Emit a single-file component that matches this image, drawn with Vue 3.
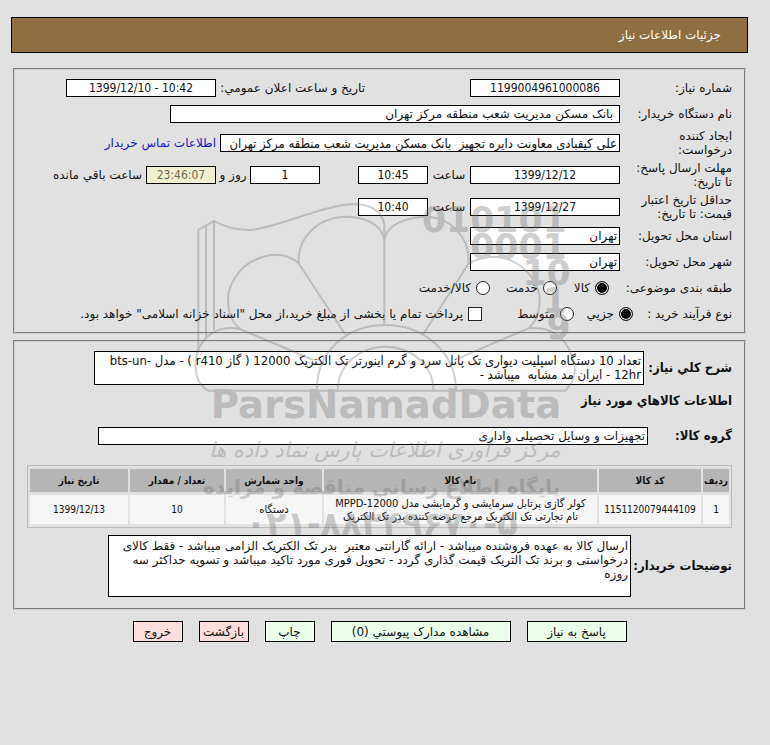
<script setup>
import { ref } from 'vue'

const subject = ref('goods')
const process = ref('small')
const treasury = ref(false)

const columns = [
  { key: 'row', title: 'ردیف' },
  { key: 'code', title: 'کد کالا' },
  { key: 'name', title: 'نام کالا' },
  { key: 'unit', title: 'واحد شمارش' },
  { key: 'qty', title: 'تعداد / مقدار' },
  { key: 'date', title: 'تاریخ نیاز' },
]
const items = [
  {
    row: '1',
    code: '1151120079444109',
    name: 'کولر گازی پرتابل سرمایشی و گرمایشی مدل MPPD-12000 نام تجارتی تک الکتریک مرجع عرضه کننده بدر تک الکتریک',
    unit: 'دستگاه',
    qty: '10',
    date: '1399/12/13',
  },
]
const summary = 'تعداد 10 دستگاه اسپلیت دیواری تک پانل سرد و گرم اینورتر تک الکتریک 12000 ( گاز r410 ) - مدل bts-un-12hr - ایران مد مشابه  میباشد -'
const notes = 'ارسال کالا به عهده فروشنده میباشد - ارائه گارانتی معتبر  بدر تک الکتریک الزامی میباشد - فقط کالای درخواستی و برند تک التریک قیمت گذاری گردد - تحویل فوری مورد تاکید میباشد و تسویه حداکثر سه روزه'
</script>

<template>
  <main class="page" dir="rtl">
    <h1 class="title">جزئیات اطلاعات نیاز</h1>

    <form class="form" @submit.prevent>
      <section class="panel">
        <div class="line">
          <label class="caption" for="number">شماره نیاز:</label>
          <input id="number" class="box center medium" value="1199004961000086" readonly />
          <div class="announce">
            <label for="announced">تاریخ و ساعت اعلان عمومي:</label>
            <input id="announced" class="box center medium" dir="ltr" value="1399/12/10 - 10:42" readonly />
          </div>
        </div>
        <div class="line">
          <label class="caption" for="buyer">نام دستگاه خریدار:</label>
          <input id="buyer" class="box wide inset" value="بانک مسکن مدیریت شعب منطقه مرکز تهران" readonly />
        </div>
        <div class="line tall">
          <label class="caption narrow" for="creator">ایجاد کننده درخواست:</label>
          <input id="creator" class="box long compact" value="علی کیقبادی معاونت دایره تجهیز  بانک مسکن مدیریت شعب منطقه مرکز تهران" readonly />
          <a class="link" href="#contact">اطلاعات تماس خریدار</a>
        </div>
        <div class="line tall">
          <label class="caption" for="deadline">مهلت ارسال پاسخ:<br />تا تاریخ:</label>
          <input id="deadline" class="box center medium" dir="ltr" value="1399/12/12" readonly />
          <label class="hour" for="deadlineHour">ساعت</label>
          <input id="deadlineHour" class="box center short" dir="ltr" value="10:45" readonly />
          <input id="days" class="box center short days" value="1" readonly />
          <label class="hour" for="days">روز و</label>
          <input id="left" class="box center short countdown" dir="ltr" value="23:46:07" readonly />
          <label class="after" for="left">ساعت باقي مانده</label>
        </div>
        <div class="line tall">
          <label class="caption" for="validity">حداقل تاریخ اعتبار<br />قیمت: تا تاریخ:</label>
          <input id="validity" class="box center medium" dir="ltr" value="1399/12/27" readonly />
          <label class="hour" for="validityHour">ساعت</label>
          <input id="validityHour" class="box center short" dir="ltr" value="10:40" readonly />
        </div>
        <div class="line">
          <label class="caption" for="province">استان محل تحویل:</label>
          <input id="province" class="box medium" value="تهران" readonly />
        </div>
        <div class="line">
          <label class="caption" for="city">شهر محل تحویل:</label>
          <input id="city" class="box medium" value="تهران" readonly />
        </div>
        <div class="line" role="radiogroup" aria-labelledby="subjectCaption">
          <span id="subjectCaption" class="caption subject">طبقه بندی موضوعی:</span>
          <label class="option first"><input v-model="subject" type="radio" value="goods" />کالا</label>
          <label class="option second"><input v-model="subject" type="radio" value="service" />خدمت</label>
          <label class="option"><input v-model="subject" type="radio" value="both" />کالا/خدمت</label>
        </div>
        <div class="line" role="radiogroup" aria-labelledby="processCaption">
          <span id="processCaption" class="caption process">نوع فرآیند خرید :</span>
          <label class="option small"><input v-model="process" type="radio" value="small" />جزیي</label>
          <label class="option mid"><input v-model="process" type="radio" value="medium" />متوسط</label>
          <label class="option"><input v-model="treasury" type="checkbox" />پرداخت تمام یا بخشی از مبلغ خرید،از محل "اسناد خزانه اسلامی" خواهد بود.</label>
        </div>
      </section>

      <section class="panel second-panel">
        <div class="line block">
          <label class="caption strong summary-caption" for="summary">شرح كلي نیاز:</label>
          <textarea id="summary" class="box area summary compact" :value="summary" readonly></textarea>
        </div>
        <h2 class="subtitle strong">اطلاعات کالاهاي مورد نیاز</h2>
        <div class="line block group">
          <label class="caption strong group-caption" for="group">گروه کالا:</label>
          <input id="group" class="box extra" value="تجهیزات و وسایل تحصیلی واداری" readonly />
        </div>
        <table class="goods">
          <thead>
            <tr>
              <th v-for="c in columns" :key="c.key" :class="c.key" scope="col">{{ c.title }}</th>
            </tr>
          </thead>
          <tbody>
            <tr v-for="item in items" :key="item.row">
              <td v-for="c in columns" :key="c.key" :class="{ words: c.key === 'name' || c.key === 'unit' }">{{ item[c.key] }}</td>
            </tr>
          </tbody>
        </table>
        <div class="line block">
          <label class="caption strong notes-caption" for="notes">توضیحات خریدار:</label>
          <textarea id="notes" class="box area notes" :value="notes" readonly></textarea>
        </div>
      </section>

      <div class="actions">
        <button class="ok normal" type="button">پاسخ به نیاز</button>
        <button class="ok large" type="button">مشاهده مدارک پیوستي (0)</button>
        <button class="ok" type="button">چاپ</button>
        <button class="exit" type="button">بازگشت</button>
        <button class="exit" type="button">خروج</button>
      </div>
    </form>

    <svg class="watermark" viewBox="0 0 1200 1080" direction="ltr" aria-hidden="true">
      <g fill="none" stroke="#6e6e6e" stroke-width="6">
        <path d="M55 490V120L102 93Q150 120 210 120C300 112 430 42 530 42Q604 48 613 105V404" />
        <path d="M78 107V440M102 93V420" />
        <path d="M613 150C604 94 540 80 495 80C405 84 350 150 357 222L495 432" />
        <path d="M613 150C622 94 700 80 740 80C820 84 872 150 865 222L730 432" />
        <path d="M357 222C330 192 280 190 250 200C175 222 138 290 145 345C148 385 165 405 182 418L400 510" />
        <path d="M865 222C900 197 955 195 985 208C1055 235 1085 300 1078 345C1074 385 1062 400 1045 415L828 508" />
        <path d="M182 418C105 400 50 450 47 520C46 562 62 590 85 602H1155C1178 582 1190 552 1182 520C1170 460 1125 405 1045 415" />
        <path d="M410 602C410 480 505 405 615 405C730 405 828 485 828 602" />
        <path d="M473 602C473 525 540 470 615 470C695 470 760 525 760 602" />
      </g>
      <g class="digits">
        <text x="1160" y="126">010101</text>
        <text x="1160" y="206">0001</text>
        <text x="1172" y="284">10</text>
        <text x="1160" y="368">1</text>
        <text x="1172" y="448">9</text>
      </g>
      <text class="brand" x="618" y="684">ParsNamadData</text>
      <text class="script" x="615" y="800">مرکز فرآوری اطلاعات پارس نماد داده ها</text>
      <text class="tagline" x="605" y="912">پایگاه اطلاع رسانی مناقصه و مزایده</text>
      <text class="phone" x="605" y="1036">۰۲۱-۸۸۳۴۹۶۷۰-۵</text>
    </svg>
  </main>
</template>

<style>
body {
  background: #e1e1e1;
}
</style>

<style scoped>
.page {
  position: relative;
  padding: 17px 22px 24px 11px;
  font: 12px/14px "DejaVu Sans", sans-serif;
  color: #111;
}
.page *,
.page {
  box-sizing: border-box;
}
.title {
  margin: 0;
  padding: 1px 26px 0;
  border: 1px solid #000;
  background: #8f6e41;
  color: #fff;
  font-size: 12px;
  font-weight: normal;
  line-height: 33px;
}
.form {
  padding: 15px 2px 0;
}
.panel {
  border: 2px groove #d0d0d0;
  padding: 5px 12px;
}
.second-panel {
  margin-top: 6px;
  padding: 9px 12px 11px;
}
.line {
  display: flex;
  align-items: center;
  min-height: 26px;
}
.line.tall {
  min-height: 32px;
}
.line.block {
  min-height: 0;
}
.caption {
  flex: 0 0 112px;
  white-space: nowrap;
}
.caption.narrow {
  padding-left: 30px;
  white-space: normal;
}
.caption.subject {
  flex-basis: 123px;
}
.caption.process {
  flex-basis: 99px;
}
.caption.summary-caption {
  flex-basis: 88px;
}
.caption.group-caption {
  flex-basis: 84px;
}
.caption.notes-caption {
  flex-basis: 101px;
}
.strong {
  font-family: "DejaVu Sans Condensed", "DejaVu Sans", sans-serif;
  font-size: 13px;
  font-weight: bold;
}
.box {
  display: block;
  min-width: 0;
  height: 18px;
  margin: 0;
  padding: 0 2px;
  border: 1px solid #000;
  border-radius: 0;
  background: #fff;
  color: #111;
  font: inherit;
  outline: none;
}
.center {
  font-family: "DejaVu Sans Condensed", "DejaVu Sans", sans-serif;
  text-align: center;
}
.compact {
  font-family: "DejaVu Sans Condensed", "DejaVu Sans", sans-serif;
  font-size: 13px;
}
.medium {
  flex: 0 1 150px;
}
.short {
  flex: 0 1 70px;
}
.wide {
  flex: 0 1 450px;
}
.long {
  flex: 0 1 400px;
}
.extra {
  flex: 0 1 550px;
}
.inset {
  padding: 0 6px;
}
.announce {
  display: flex;
  flex: 0 0 404px;
  align-items: center;
  justify-content: space-between;
  padding-right: 105px;
  white-space: nowrap;
}
.announce .medium {
  flex-shrink: 0;
}
.link {
  padding-right: 4px;
  color: #1414c8;
  text-decoration: none;
  white-space: nowrap;
}
.hour {
  flex: 0 0 42px;
  text-align: center;
  white-space: nowrap;
}
.days {
  margin-right: 38px;
}
.days + .hour {
  flex-basis: 34px;
}
.countdown {
  background: #f0f0d0;
  color: #6b6b50;
}
.after {
  padding-right: 4px;
  white-space: nowrap;
}
.option {
  display: flex;
  align-items: center;
  gap: 5px;
  white-space: nowrap;
}
.first {
  flex: 0 0 52px;
}
.second {
  flex: 0 0 67px;
}
.small {
  flex: 0 0 59px;
}
.mid {
  flex: 0 0 92px;
}
.option input {
  appearance: none;
  flex: none;
  width: 14px;
  height: 14px;
  margin: 0;
  border: 1px solid #222;
  background: #fff;
}
.option input[type="radio"] {
  border-radius: 50%;
}
.option input[type="radio"]:checked {
  background: #000;
  box-shadow: inset 0 0 0 1px #fff;
}
.area {
  resize: none;
  overflow: hidden;
  line-height: 14px;
}
.summary {
  flex: 0 1 550px;
  height: 34px;
  padding-top: 2px;
}
.notes {
  flex: 0 1 523px;
  height: 62px;
  padding-top: 3px;
}
.subtitle {
  margin: 9px 0 0;
  line-height: 14px;
}
.group {
  padding: 19px 0 20px;
}
.goods {
  width: 100%;
  margin-bottom: 7px;
  table-layout: fixed;
  border: 1px solid #bbb;
  border-collapse: separate;
  border-spacing: 2px 3px;
  text-align: center;
  font-family: "DejaVu Sans Condensed", "DejaVu Sans", sans-serif;
  font-size: 10px;
  line-height: 13px;
}
.goods th {
  height: 23px;
  padding: 0;
  background: #b5b5b5;
}
.goods td {
  height: 29px;
  padding: 0;
  background: #f6f6f6;
}
.goods .words {
  padding: 0 4px;
  font-size: 11px;
}
.row {
  width: 26px;
}
.code {
  width: 102px;
}
.unit {
  width: 96px;
}
.qty {
  width: 94px;
}
.date {
  width: 98px;
}
.actions {
  display: flex;
  justify-content: center;
  gap: 16px;
  padding-top: 11px;
}
.actions button {
  width: 50px;
  height: 21px;
  padding: 0;
  border: 1px solid #000;
  color: #111;
  font: inherit;
  white-space: nowrap;
}
.actions .normal {
  width: 100px;
}
.actions .large {
  width: 180px;
}
.actions .ok {
  background: #ebffeb;
}
.actions .exit {
  background: #ffdede;
}
.watermark {
  position: absolute;
  top: 190px;
  left: calc(50% - 205px);
  width: 400px;
  height: 360px;
  opacity: 0.32;
  pointer-events: none;
}
.watermark text {
  fill: #6e6e6e;
  text-anchor: middle;
  font-family: "DejaVu Sans", sans-serif;
  font-weight: bold;
}
.watermark .digits text {
  direction: ltr;
  text-anchor: end;
  font-size: 104px;
}
.watermark .brand {
  direction: ltr;
  font-size: 116px;
}
.watermark .script {
  font-size: 62px;
  font-style: italic;
  font-weight: normal;
}
.watermark .tagline {
  font-size: 60px;
}
.watermark .phone {
  direction: ltr;
  font-size: 100px;
}
</style>
